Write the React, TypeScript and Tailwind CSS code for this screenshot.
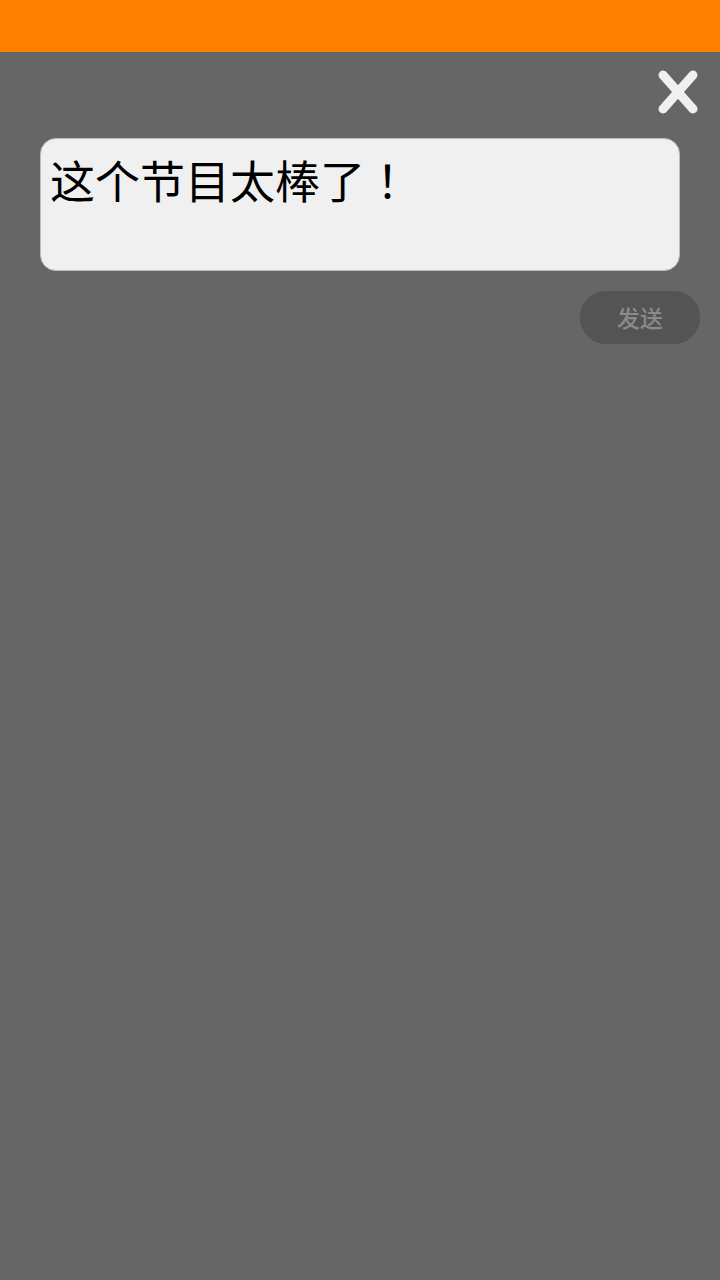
export default function App() {
  return (
    <div className="w-[720px] h-[1280px] bg-[#666666] flex flex-col font-['Noto_Sans_CJK_SC',sans-serif]">
      <div className="h-[52px] bg-[#ff7f00]" />
      <div className="flex justify-end pt-[18px] pr-[22px]">
        <svg width="40" height="44" viewBox="0 0 40 44">
          <path d="M5 5 L35 39 M35 5 L5 39" stroke="#f0f0f0" strokeWidth="9" strokeLinecap="round" />
        </svg>
      </div>
      <div className="mx-[40px] mt-[24px] h-[133px] rounded-[16px] bg-[#f0f0f0] border border-[#bdbdbd] px-[9px] pt-[14px]">
        <p className="text-[45px] leading-[1.2] text-black">
          这个节目太棒了<span className="font-['Noto_Sans_CJK_TC',sans-serif]">！</span>
        </p>
      </div>
      <div className="flex justify-end pr-[20px] mt-[20px]">
        <button className="w-[120px] h-[53px] rounded-[26px] bg-[#545454] text-[23px] font-medium text-[#8a8a8a]">
          发送
        </button>
      </div>
    </div>
  );
}
